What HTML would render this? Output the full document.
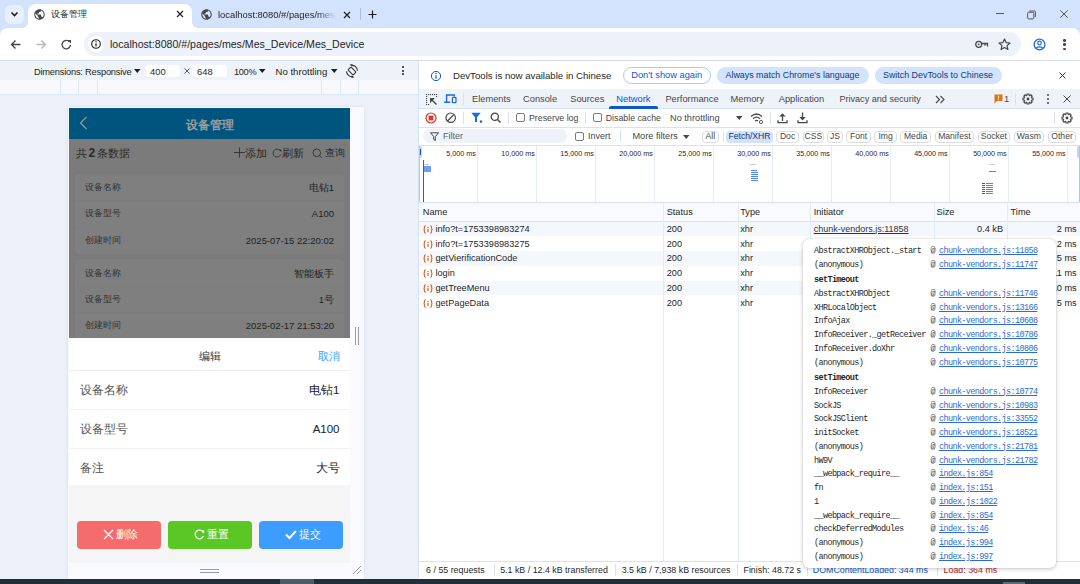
<!DOCTYPE html>
<html><head><meta charset="utf-8">
<style>
*{box-sizing:border-box;margin:0;padding:0}
html,body{width:1080px;height:584px;overflow:hidden;background:#fff;font-family:"Liberation Sans",sans-serif;color:#1f1f1f}
.a{position:absolute}
.t{position:absolute;white-space:nowrap;line-height:1}
svg{position:absolute;overflow:visible}
.mono{font-family:"Liberation Mono",monospace;font-size:8.5px;letter-spacing:-0.63px;color:#4a4a4a}
</style></head><body>

<!-- ===== Tab strip ===== -->
<div class="a" style="left:0;top:0;width:1080px;height:36px;background:#d3e3fd"></div>
<!-- active tab -->
<div class="a" style="left:28px;top:4px;width:164px;height:26px;background:#fff;border-radius:8px 8px 0 0"></div>
<div class="a" style="left:22px;top:22px;width:6px;height:6px;background:#fff"></div>
<div class="a" style="left:16px;top:16px;width:12px;height:12px;background:#d3e3fd;border-radius:0 0 6px 0"></div>
<div class="a" style="left:192px;top:22px;width:6px;height:6px;background:#fff"></div>
<div class="a" style="left:192px;top:16px;width:12px;height:12px;background:#d3e3fd;border-radius:0 0 0 6px"></div>
<div class="a" style="left:5px;top:5px;width:19px;height:19px;border-radius:6px;background:#e8f0fe"></div>
<svg style="left:0;top:0" width="30" height="30"><path d="M11.5 12.5 L14.5 15.5 L17.5 12.5" fill="none" stroke="#1f1f1f" stroke-width="1.6"/></svg>

<!-- globe -->
<svg style="left:34px;top:8.5px" width="11" height="11" viewBox="1.5 1.5 21 21"><path d="M12 2C6.48 2 2 6.48 2 12s4.48 10 10 10 10-4.48 10-10S17.52 2 12 2zm-1 17.930c-3.95-.49-7-3.85-7-7.93 0-.62.08-1.21.21-1.79L9 15v1c0 1.1.9 2 2 2v1.93zm6.9-2.54c-.26-.81-1-1.39-1.9-1.39h-1v-3c0-.55-.45-1-1-1H8v-2h2c.55 0 1-.45 1-1V7h2c1.1 0 2-.9 2-2v-.41c2.93 1.19 5 4.06 5 7.41 0 2.08-.8 3.970-2.1 5.39z" fill="#474747"/></svg>
<div class="t" style="left:51px;top:9.5px;font-size:8.6px;color:#1f1f1f">设备管理</div>
<svg style="left:176px;top:10px" width="8" height="8"><path d="M1 1 L7 7 M7 1 L1 7" stroke="#1f1f1f" stroke-width="1.2"/></svg>
<!-- tab 2 -->
<svg style="left:201px;top:8.5px" width="11" height="11" viewBox="1.5 1.5 21 21"><path d="M12 2C6.48 2 2 6.48 2 12s4.48 10 10 10 10-4.48 10-10S17.52 2 12 2zm-1 17.930c-3.95-.49-7-3.85-7-7.93 0-.62.08-1.21.21-1.79L9 15v1c0 1.1.9 2 2 2v1.93zm6.9-2.54c-.26-.81-1-1.39-1.9-1.39h-1v-3c0-.55-.45-1-1-1H8v-2h2c.55 0 1-.45 1-1V7h2c1.1 0 2-.9 2-2v-.41c2.93 1.19 5 4.06 5 7.41 0 2.08-.8 3.970-2.1 5.39z" fill="#474747"/></svg>
<div class="t" style="left:218px;top:8px;line-height:13px;font-size:9.4px;color:#1f1f1f;width:118px;overflow:hidden;-webkit-mask-image:linear-gradient(90deg,#000 85%,transparent)">localhost:8080/#/pages/mes/Mes_Device</div>
<svg style="left:343px;top:10.5px" width="8" height="8"><path d="M1 1 L7 7 M7 1 L1 7" stroke="#1f1f1f" stroke-width="1.2"/></svg>
<div class="a" style="left:360px;top:8px;width:1px;height:12px;background:#a8c0e8"></div>
<svg style="left:368px;top:9.5px" width="9" height="9"><path d="M4.5 0.5 V8.5 M0.5 4.5 H8.5" stroke="#1f1f1f" stroke-width="1.2"/></svg>
<!-- window controls -->
<div class="a" style="left:996px;top:13px;width:8px;height:1px;background:#555"></div>
<svg style="left:1026.5px;top:9.5px" width="10" height="10"><rect x="0.6" y="2.3" width="6.2" height="6.6" rx="1" fill="none" stroke="#555" stroke-width="1"/><path d="M2.3 1 H7.6 Q8.4 1 8.4 1.8 V7" fill="none" stroke="#555" stroke-width="1"/></svg>
<svg style="left:1060px;top:10px" width="8" height="8"><path d="M0.3 0.3 L7.7 7.7 M7.7 0.3 L0.3 7.7" stroke="#444" stroke-width="0.9"/></svg>

<!-- ===== Toolbar ===== -->
<div class="a" style="left:0;top:28px;width:1080px;height:32px;background:#fff;border-radius:8px 8px 0 0"></div>
<div class="a" style="left:0;top:60px;width:1080px;height:1px;background:#d7dce4"></div>
<svg style="left:10px;top:39px" width="12" height="11"><path d="M10.5 5.5 H1.5 M5.5 1.5 L1.5 5.5 L5.5 9.5" fill="none" stroke="#474747" stroke-width="1.4"/></svg>
<svg style="left:36px;top:39px" width="12" height="11"><path d="M0.5 5.5 H9.5 M5.5 1.5 L9.5 5.5 L5.5 9.5" fill="none" stroke="#b8b8b8" stroke-width="1.4"/></svg>
<svg style="left:61px;top:39px" width="11" height="11"><path d="M8.6 3 A4.2 4.2 0 1 0 9.5 6" fill="none" stroke="#474747" stroke-width="1.4"/><path d="M6.5 1 L10 1 L10 4.5Z" fill="#474747"/></svg>
<div class="a" style="left:84px;top:32px;width:937px;height:24px;border-radius:12px;background:#edf2fa"></div>
<div class="a" style="left:88px;top:36px;width:16px;height:16px;border-radius:8px;background:#fff"></div>
<svg style="left:91px;top:39px" width="10" height="10"><circle cx="5" cy="5" r="4.3" fill="none" stroke="#1f1f1f" stroke-width="1.1"/><path d="M5 4.2 V7.5" stroke="#1f1f1f" stroke-width="1.2"/><circle cx="5" cy="2.7" r="0.7" fill="#1f1f1f"/></svg>
<div class="t" style="left:110px;top:39px;font-size:10.6px;color:#1f1f1f">localhost<span style="color:#1f1f1f">:8080/#/pages/mes/Mes_Device/Mes_Device</span></div>
<svg style="left:975px;top:40px" width="14" height="9"><circle cx="3.7" cy="4.3" r="3" fill="none" stroke="#474747" stroke-width="1.3"/><circle cx="3.7" cy="4.3" r="0.9" fill="#474747"/><path d="M6.7 3.5 H12.5 V6.5 M10 3.5 V5.8" fill="none" stroke="#474747" stroke-width="1.3"/></svg>
<svg style="left:998px;top:38px" width="13" height="13"><path d="M6.5 1 L8.1 4.6 L12 5 L9 7.6 L9.9 11.5 L6.5 9.5 L3.1 11.5 L4 7.6 L1 5 L4.9 4.6Z" fill="none" stroke="#474747" stroke-width="1.2" stroke-linejoin="round"/></svg>
<svg style="left:1033px;top:38px" width="13" height="13"><circle cx="6.5" cy="6.5" r="5.4" fill="none" stroke="#1f6ae0" stroke-width="1.3"/><circle cx="6.5" cy="5" r="1.8" fill="none" stroke="#1f6ae0" stroke-width="1.2"/><path d="M3 10.2 Q6.5 7.5 10 10.2" fill="none" stroke="#1f6ae0" stroke-width="1.2"/></svg>
<div class="a" style="left:1063.2px;top:39.2px;width:2.5px;height:2.5px;border-radius:50%;background:#474747"></div>
<div class="a" style="left:1063.2px;top:43.4px;width:2.5px;height:2.5px;border-radius:50%;background:#474747"></div>
<div class="a" style="left:1063.2px;top:47.6px;width:2.5px;height:2.5px;border-radius:50%;background:#474747"></div>

<!-- ===== Left: device emulation ===== -->
<!-- device toolbar -->
<div class="a" style="left:0;top:61px;width:418px;height:19px;background:#eef2f9"></div>
<div class="t" style="left:34px;top:67.9px;font-size:9.3px;letter-spacing:-0.22px;color:#1f1f1f">Dimensions: Responsive</div>
<svg style="left:134px;top:69px" width="7" height="5"><path d="M0 0 H6.5 L3.25 4Z" fill="#1f1f1f"/></svg>
<div class="a" style="left:146px;top:64.5px;width:34px;height:12px;background:#fff;border-radius:3px"></div>
<div class="t" style="left:150px;top:66.6px;font-size:9.4px;color:#1f1f1f">400</div>
<svg style="left:184px;top:68px" width="6" height="6"><path d="M0.5 0.5 L5.5 5.5 M5.5 0.5 L0.5 5.5" stroke="#474747" stroke-width="0.9"/></svg>
<div class="a" style="left:192px;top:64.5px;width:35px;height:12px;background:#fff;border-radius:3px"></div>
<div class="t" style="left:197px;top:66.6px;font-size:9.4px;color:#1f1f1f">648</div>
<div class="t" style="left:234px;top:67.9px;font-size:9.2px;letter-spacing:-0.3px;color:#1f1f1f">100%</div>
<svg style="left:259px;top:69px" width="7" height="5"><path d="M0 0 H6.5 L3.25 4Z" fill="#1f1f1f"/></svg>
<div class="t" style="left:275.5px;top:66.8px;font-size:9.6px;color:#1f1f1f">No throttling</div>
<svg style="left:331px;top:69px" width="7" height="5"><path d="M0 0 H6.5 L3.25 4Z" fill="#1f1f1f"/></svg>
<svg style="left:345.4px;top:63.5px" width="14" height="14"><rect x="4.9" y="3.4" width="4.2" height="7.2" rx="1" transform="rotate(-45 7 7)" fill="none" stroke="#333" stroke-width="1.1"/><path d="M6.2 1.4 A5.6 5.6 0 0 1 12.5 6.8" fill="none" stroke="#333" stroke-width="1.1"/><path d="M7.8 12.6 A5.6 5.6 0 0 1 1.5 7.2" fill="none" stroke="#333" stroke-width="1.1"/><path d="M4.6 0.8 L7.6 0 L7 2.6Z M9.4 13.2 L6.4 14 L7 11.4Z" fill="#333"/></svg>
<div class="a" style="left:401.5px;top:66px;width:2px;height:2px;border-radius:1px;background:#1f1f1f"></div>
<div class="a" style="left:401.5px;top:69.5px;width:2px;height:2px;border-radius:1px;background:#1f1f1f"></div>
<div class="a" style="left:401.5px;top:73px;width:2px;height:2px;border-radius:1px;background:#1f1f1f"></div>
<!-- ruler -->
<div class="a" style="left:0;top:80px;width:418px;height:15px;background:#f7f9fd;border-bottom:1px solid #dde6f5"></div>
<div class="a" style="left:60px;top:80px;width:1px;height:14px;background:#dde6f5"></div>
<div class="a" style="left:78px;top:80px;width:1px;height:14px;background:#dde6f5"></div>
<div class="a" style="left:97px;top:80px;width:1px;height:14px;background:#dde6f5"></div>
<div class="a" style="left:321px;top:80px;width:1px;height:14px;background:#dde6f5"></div>
<div class="a" style="left:340px;top:80px;width:1px;height:14px;background:#dde6f5"></div>
<div class="a" style="left:358px;top:80px;width:1px;height:14px;background:#dde6f5"></div>
<!-- device area -->
<div class="a" style="left:0;top:95px;width:418px;height:484px;background:#ecf0f8"></div>
<div class="a" style="left:68px;top:107px;width:296px;height:472px;background:#f8faff;box-shadow:0 0 3px rgba(60,80,120,.12)"></div>
<!-- scrollbar handle -->
<div class="a" style="left:355px;top:327px;width:1px;height:18px;background:#9a9a9a"></div>
<div class="a" style="left:358px;top:327px;width:1px;height:18px;background:#9a9a9a"></div>
<!-- bottom handle -->
<div class="a" style="left:200px;top:569px;width:19px;height:1px;background:#9a9a9a"></div>
<div class="a" style="left:200px;top:572px;width:19px;height:1px;background:#9a9a9a"></div>
<svg style="left:352px;top:565px" width="10" height="10"><path d="M1 9 L9 1 M5 9 L9 5" stroke="#9a9a9a" stroke-width="1"/></svg>

<!-- phone -->
<div class="a" style="left:69px;top:108px;width:281px;height:455px;overflow:hidden;background:#f5f5f5">
  <!-- header -->
  <div class="a" style="left:0;top:0;width:281px;height:31px;background:#00557f"></div>
  <svg style="left:10px;top:8px" width="9" height="14"><path d="M7.5 1 L1.5 7 L7.5 13" fill="none" stroke="#a09c96" stroke-width="1.1"/></svg>
  <div class="t" style="left:0;width:281px;text-align:center;top:10.5px;font-size:12px;font-weight:bold;color:#9c9c9c">设备管理</div>
  <!-- list overlay region -->
  <div class="a" style="left:0;top:31px;width:281px;height:199px;background:#7b7b7b"></div>
  <div class="t" style="left:7px;top:38.6px;font-size:11px;color:#282828">共<b style="font-size:12px;margin:0 1.5px">2</b>条数据</div>
  <svg style="left:165px;top:39px" width="11" height="11"><path d="M5.5 0.5 V10.5 M0 5.5 H11" stroke="#303030" stroke-width="0.9"/></svg>
  <div class="t" style="left:176px;top:40px;font-size:10.5px;color:#282828">添加</div>
  <svg style="left:203px;top:40px" width="10" height="10"><path d="M8.6 3.2 A4 4 0 1 0 8.8 6.5" fill="none" stroke="#303030" stroke-width="0.9"/><path d="M6.8 1.5 L9.3 1.5 L9.3 4Z" fill="#303030"/></svg>
  <div class="t" style="left:213px;top:40px;font-size:10.5px;color:#282828">刷新</div>
  <svg style="left:243px;top:39.5px" width="11" height="11"><circle cx="4.8" cy="4.8" r="3.8" fill="none" stroke="#303030" stroke-width="0.9"/><path d="M7.5 7.5 L10 10" stroke="#303030" stroke-width="0.9"/></svg>
  <div class="t" style="left:256px;top:40.3px;font-size:10.2px;color:#282828">查询</div>
  <!-- card 1 -->
  <div class="a" style="left:6px;top:66px;width:269px;height:79.5px;background:#7f7f7f;border-radius:3px;box-shadow:0 0 1px rgba(0,0,0,.06)"></div>
  <div class="a" style="left:6px;top:92px;width:269px;height:1px;background:#7c7c7c"></div>
  <div class="a" style="left:6px;top:119px;width:269px;height:1px;background:#7c7c7c"></div>
  <div class="t" style="left:16px;top:75px;font-size:9.2px;color:#333">设备名称</div>
  <div class="t" style="right:16px;top:75px;font-size:9.5px;color:#222">电钻1</div>
  <div class="t" style="left:16px;top:101px;font-size:9.2px;color:#333">设备型号</div>
  <div class="t" style="right:16px;top:101px;font-size:9.5px;color:#222">A100</div>
  <div class="t" style="left:16px;top:128px;font-size:9.2px;color:#333">创建时间</div>
  <div class="t" style="right:16px;top:128px;font-size:9.5px;color:#222">2025-07-15 22:20:02</div>
  <!-- card 2 -->
  <div class="a" style="left:6px;top:151px;width:269px;height:90px;background:#7f7f7f;border-radius:3px;box-shadow:0 0 1px rgba(0,0,0,.08)"></div>
  <div class="a" style="left:6px;top:178px;width:269px;height:1px;background:#7c7c7c"></div>
  <div class="a" style="left:6px;top:204px;width:269px;height:1px;background:#7c7c7c"></div>
  <div class="t" style="left:16px;top:161px;font-size:9.2px;color:#333">设备名称</div>
  <div class="t" style="right:16px;top:161px;font-size:9.5px;color:#222">智能板手</div>
  <div class="t" style="left:16px;top:187px;font-size:9.2px;color:#333">设备型号</div>
  <div class="t" style="right:16px;top:187px;font-size:9.5px;color:#222">1号</div>
  <div class="t" style="left:16px;top:213px;font-size:9.2px;color:#333">创建时间</div>
  <div class="t" style="right:16px;top:213px;font-size:9.5px;color:#222">2025-02-17 21:53:20</div>
  <!-- popup -->
  <div class="a" style="left:0;top:230px;width:281px;height:225px;background:#f5f5f5"></div>
  <div class="a" style="left:0;top:230px;width:281px;height:147px;background:#fff"></div>
  <div class="t" style="left:0;width:281px;text-align:center;top:243.2px;font-size:11px;color:#333">编辑</div>
  <div class="t" style="right:10.5px;top:243px;font-size:10.5px;color:#3c9cff">取消</div>
  <div class="a" style="left:0;top:262px;width:281px;height:1px;background:#eeeeee"></div>
  <div class="t" style="left:11px;top:277px;font-size:11.5px;color:#555">设备名称</div>
  <div class="t" style="right:10.5px;top:277px;font-size:11.5px;color:#222">电钻1</div>
  <div class="a" style="left:0;top:301px;width:281px;height:1px;background:#f2f2f2"></div>
  <div class="t" style="left:11px;top:316px;font-size:11.5px;color:#555">设备型号</div>
  <div class="t" style="right:10.5px;top:316px;font-size:11.5px;color:#222">A100</div>
  <div class="a" style="left:0;top:340px;width:281px;height:1px;background:#f2f2f2"></div>
  <div class="t" style="left:11px;top:355px;font-size:11.5px;color:#555">备注</div>
  <div class="t" style="right:10.5px;top:355px;font-size:11.5px;color:#222">大号</div>
  <!-- buttons -->
  <div class="a" style="left:7.5px;top:413px;width:84px;height:27.5px;border-radius:4px;background:#f56c6c"></div>
  <div class="a" style="left:98.7px;top:413px;width:84px;height:27.5px;border-radius:4px;background:#5ac725"></div>
  <div class="a" style="left:190.4px;top:413px;width:84px;height:27.5px;border-radius:4px;background:#3c9cff"></div>
  <svg style="left:34px;top:421px" width="11" height="11"><path d="M1 1 L10 10 M10 1 L1 10" stroke="#fff" stroke-width="1.2"/></svg>
  <div class="t" style="left:47px;top:421px;font-size:10.5px;color:#fff">删除</div>
  <svg style="left:125px;top:421px" width="11" height="11"><path d="M9.2 3.3 A4.3 4.3 0 1 0 9.5 7" fill="none" stroke="#fff" stroke-width="1.3"/><path d="M7 1.2 L10.2 1.2 L10.2 4.5Z" fill="#fff"/></svg>
  <div class="t" style="left:138px;top:421px;font-size:10.5px;color:#fff">重置</div>
  <svg style="left:216px;top:421px" width="12" height="11"><path d="M1 5.5 L4.5 9 L11 2" fill="none" stroke="#fff" stroke-width="2"/></svg>
  <div class="t" style="left:230px;top:421px;font-size:10.5px;color:#fff">提交</div>
</div>


<!-- ===== DevTools ===== -->
<!-- devtools base -->
<div class="a" style="left:418px;top:61px;width:662px;height:517px;background:#fff"></div>
<div class="a" style="left:418px;top:61px;width:1px;height:517px;background:#d6e2f5"></div>
<!-- infobar -->
<svg style="left:430px;top:70px" width="12" height="12"><circle cx="6" cy="6" r="4.6" fill="none" stroke="#0b57d0" stroke-width="1"/><path d="M6 5.2 V8.8" stroke="#0b57d0" stroke-width="1.2"/><circle cx="6" cy="3.6" r="0.75" fill="#0b57d0"/></svg>
<div class="t" style="left:453px;top:70.5px;font-size:9.65px;color:#1f1f1f">DevTools is now available in Chinese</div>
<div class="a" style="left:622.5px;top:67px;width:88.5px;height:17px;border:1px solid #a8c7fa;border-radius:9px"></div>
<div class="t" style="left:622.5px;width:88.5px;text-align:center;top:71px;font-size:9.3px;color:#0b57d0">Don't show again</div>
<div class="a" style="left:716.5px;top:67px;width:152px;height:17px;background:#d3e3fd;border-radius:9px"></div>
<div class="t" style="left:716.5px;width:152px;text-align:center;top:71.3px;font-size:8.9px;color:#0a3a7a">Always match Chrome's language</div>
<div class="a" style="left:874.5px;top:67px;width:127px;height:17px;background:#d3e3fd;border-radius:9px"></div>
<div class="t" style="left:874.5px;width:127px;text-align:center;top:71.3px;font-size:8.9px;color:#0a3a7a">Switch DevTools to Chinese</div>
<svg style="left:1058.5px;top:71.5px" width="7" height="7"><path d="M0.5 0.5 L6.5 6.5 M6.5 0.5 L0.5 6.5" stroke="#333" stroke-width="1"/></svg>
<!-- tab bar -->
<div class="a" style="left:419px;top:89px;width:661px;height:20px;background:#eef2f9;border-bottom:1px solid #d6e2f5"></div>
<svg style="left:425.5px;top:93.8px" width="12" height="12"><g fill="#474747"><rect x="0" y="0" width="1.1" height="1.1"/><rect x="2" y="0" width="1.1" height="1.1"/><rect x="4" y="0" width="1.1" height="1.1"/><rect x="6" y="0" width="1.1" height="1.1"/><rect x="8" y="0" width="1.1" height="1.1"/><rect x="10" y="0" width="1.1" height="1.1"/><rect x="0" y="2" width="1.1" height="1.1"/><rect x="0" y="4" width="1.1" height="1.1"/><rect x="0" y="6" width="1.1" height="1.1"/><rect x="0" y="8" width="1.1" height="1.1"/><rect x="0" y="10" width="1.1" height="1.1"/><rect x="10" y="2" width="1.1" height="1.1"/><rect x="2" y="10" width="1.1" height="1.1"/></g><path d="M4.8 4.8 L10.5 10.5" stroke="#474747" stroke-width="1.4"/><path d="M4 4 H9 L4 9Z" fill="#474747"/></svg>
<svg style="left:444px;top:93px" width="14" height="11"><path d="M2.6 9 V2 H10.3 V3.5" fill="none" stroke="#1f6ae0" stroke-width="1.4"/><path d="M0.6 9.2 H5.6" stroke="#1f6ae0" stroke-width="1.5" stroke-linecap="round"/><rect x="8.4" y="4.3" width="3.6" height="5.4" rx="0.8" fill="none" stroke="#1f6ae0" stroke-width="1.3"/></svg>
<div class="a" style="left:463px;top:93px;width:1px;height:12px;background:#d6e2f5"></div>
<div class="t" style="left:472px;top:94.5px;font-size:9.3px;color:#474747">Elements</div>
<div class="t" style="left:523px;top:94.5px;font-size:9.3px;color:#474747">Console</div>
<div class="t" style="left:570.2px;top:94.5px;font-size:9.3px;color:#474747">Sources</div>
<div class="t" style="left:616.3px;top:94.5px;font-size:9.3px;color:#0b57d0">Network</div>
<div class="a" style="left:609px;top:106px;width:49px;height:2.5px;border-radius:2px 2px 0 0;background:#0b57d0"></div>
<div class="t" style="left:665.4px;top:94.5px;font-size:9.3px;color:#474747">Performance</div>
<div class="t" style="left:730.5px;top:94.5px;font-size:9.3px;color:#474747">Memory</div>
<div class="t" style="left:778.7px;top:94.5px;font-size:9.3px;color:#474747">Application</div>
<div class="t" style="left:839.4px;top:94.5px;font-size:9.1px;color:#474747">Privacy and security</div>
<svg style="left:935px;top:95px" width="11" height="9"><path d="M1 1 L4.5 4.5 L1 8 M5.5 1 L9 4.5 L5.5 8" fill="none" stroke="#474747" stroke-width="1.1"/></svg>
<svg style="left:994px;top:94px" width="9" height="10"><path d="M0.5 0.5 H8.5 V7 H3 L0.5 9.5Z" fill="#e8710a"/><path d="M4.5 1.8 V4.6 M4.5 5.5 V6.3" stroke="#fff" stroke-width="1.1"/></svg>
<div class="t" style="left:1004px;top:94.5px;font-size:9.3px;color:#474747">1</div>
<div class="a" style="left:1015px;top:93px;width:1px;height:12px;background:#d6e2f5"></div>
<svg style="left:1021.5999999999999px;top:92.6px" width="12" height="12" viewBox="0 0 24 24"><path d="M19.26 9.75 L22.02 10.07 L22.02 13.93 L19.26 14.25 L18.72 15.55 L20.44 17.72 L17.72 20.44 L15.55 18.72 L14.25 19.26 L13.93 22.02 L10.07 22.02 L9.75 19.26 L8.45 18.72 L6.28 20.44 L3.56 17.72 L5.28 15.55 L4.74 14.25 L1.98 13.93 L1.98 10.07 L4.74 9.75 L5.28 8.45 L3.56 6.28 L6.28 3.56 L8.45 5.28 L9.75 4.74 L10.07 1.98 L13.93 1.98 L14.25 4.74 L15.55 5.28 L17.72 3.56 L20.44 6.28 L18.72 8.45Z" fill="none" stroke="#474747" stroke-width="2.3" stroke-linejoin="round"/><circle cx="12" cy="12" r="2.8" fill="#474747"/></svg>
<div class="a" style="left:1046.5px;top:94px;width:2px;height:2px;border-radius:1px;background:#474747"></div>
<div class="a" style="left:1046.5px;top:98px;width:2px;height:2px;border-radius:1px;background:#474747"></div>
<div class="a" style="left:1046.5px;top:102px;width:2px;height:2px;border-radius:1px;background:#474747"></div>
<svg style="left:1062.5px;top:95px" width="8" height="8"><path d="M0.5 0.5 L7.5 7.5 M7.5 0.5 L0.5 7.5" stroke="#474747" stroke-width="1"/></svg>
<!-- network toolbar -->
<div class="a" style="left:419px;top:127px;width:661px;height:1px;background:#d6e2f5"></div>
<svg style="left:424.5px;top:111.5px" width="12" height="12"><circle cx="6" cy="6" r="5" fill="none" stroke="#dc362e" stroke-width="1.2"/><rect x="3.6" y="3.6" width="4.8" height="4.8" fill="#dc362e"/></svg>
<svg style="left:444.5px;top:112px" width="12" height="12"><circle cx="5.7" cy="5.7" r="4.7" fill="none" stroke="#474747" stroke-width="1.2"/><path d="M2.5 9 L9 2.5" stroke="#474747" stroke-width="1.2"/></svg>
<div class="a" style="left:463px;top:111.5px;width:1px;height:12px;background:#d6e2f5"></div>
<svg style="left:471px;top:112px" width="12" height="12"><path d="M0.3 0.8 H9.7 L6 5.3 V10 H4 V5.3Z" fill="#1f6ae0"/><circle cx="10" cy="9.6" r="1.3" fill="#1f6ae0"/></svg>
<svg style="left:490px;top:111.5px" width="12" height="12"><circle cx="4.8" cy="4.8" r="3.6" fill="none" stroke="#474747" stroke-width="1.3"/><path d="M7.5 7.5 L10.5 10.5" stroke="#474747" stroke-width="1.5"/></svg>
<div class="a" style="left:508px;top:111.5px;width:1px;height:12px;background:#d6e2f5"></div>
<div class="a" style="left:516px;top:113px;width:9px;height:9px;border:1px solid #7a7a7a;border-radius:2px"></div>
<div class="t" style="left:529px;top:113.8px;font-size:8.8px;color:#474747">Preserve log</div>
<div class="a" style="left:585px;top:111.5px;width:1px;height:12px;background:#d6e2f5"></div>
<div class="a" style="left:593px;top:113px;width:9px;height:9px;border:1px solid #7a7a7a;border-radius:2px"></div>
<div class="t" style="left:605.7px;top:113.8px;font-size:8.8px;color:#474747">Disable cache</div>
<div class="t" style="left:670px;top:113.8px;font-size:9.2px;color:#474747">No throttling</div>
<svg style="left:736px;top:116px" width="7" height="5"><path d="M0 0 H6.5 L3.25 4Z" fill="#474747"/></svg>
<svg style="left:750px;top:111.5px" width="14" height="12"><path d="M1 4.5 Q6.5 -0.5 12 4.5 M3 6.8 Q6.5 3.6 10 6.8 M5 9 Q6.5 7.8 8 9" fill="none" stroke="#474747" stroke-width="1.2"/><circle cx="11" cy="10" r="1.6" fill="#fff" stroke="#474747" stroke-width="0.9"/></svg>
<div class="a" style="left:770px;top:111.5px;width:1px;height:12px;background:#d6e2f5"></div>
<svg style="left:777px;top:111.5px" width="11" height="12"><path d="M5.5 9 V3" fill="none" stroke="#474747" stroke-width="1.3"/><path d="M2.3 4.6 L5.5 1.2 L8.7 4.6Z" fill="#474747"/><path d="M1 8.2 V10.6 H10 V8.2" fill="none" stroke="#474747" stroke-width="1.3"/></svg>
<svg style="left:796.5px;top:111.5px" width="11" height="12"><path d="M5.5 0.5 V6" fill="none" stroke="#474747" stroke-width="1.3"/><path d="M2.3 5 L5.5 8.4 L8.7 5Z" fill="#474747"/><path d="M1 8.2 V10.6 H10 V8.2" fill="none" stroke="#474747" stroke-width="1.3"/></svg>
<div class="a" style="left:1054px;top:111.5px;width:1px;height:12px;background:#d6e2f5"></div>
<svg style="left:1060.7px;top:111.5px" width="12" height="12" viewBox="0 0 24 24"><path d="M19.26 9.75 L22.02 10.07 L22.02 13.93 L19.26 14.25 L18.72 15.55 L20.44 17.72 L17.72 20.44 L15.55 18.72 L14.25 19.26 L13.93 22.02 L10.07 22.02 L9.75 19.26 L8.45 18.72 L6.28 20.44 L3.56 17.72 L5.28 15.55 L4.74 14.25 L1.98 13.93 L1.98 10.07 L4.74 9.75 L5.28 8.45 L3.56 6.28 L6.28 3.56 L8.45 5.28 L9.75 4.74 L10.07 1.98 L13.93 1.98 L14.25 4.74 L15.55 5.28 L17.72 3.56 L20.44 6.28 L18.72 8.45Z" fill="none" stroke="#474747" stroke-width="2.3" stroke-linejoin="round"/><circle cx="12" cy="12" r="2.8" fill="#474747"/></svg>
<!-- filter row -->
<div class="a" style="left:419px;top:145px;width:661px;height:1px;background:#d6e2f5"></div>
<div class="a" style="left:422.5px;top:129px;width:144.5px;height:14px;border-radius:7px;background:#eef2f9"></div>
<svg style="left:429.5px;top:131.5px" width="9" height="9"><path d="M0.5 0.8 H8.5 L5.3 4.6 V8.5 L3.7 7.5 V4.6Z" fill="none" stroke="#474747" stroke-width="1"/></svg>
<div class="t" style="left:443px;top:131.5px;font-size:9px;color:#5f6368">Filter</div>
<div class="a" style="left:575px;top:131.5px;width:9px;height:9px;border:1px solid #7a7a7a;border-radius:2px"></div>
<div class="t" style="left:588px;top:132.2px;font-size:9px;color:#474747">Invert</div>
<div class="a" style="left:619.5px;top:130px;width:1px;height:12px;background:#d6e2f5"></div>
<div class="t" style="left:632.4px;top:132.2px;font-size:9.2px;color:#474747">More filters</div>
<svg style="left:683px;top:134.5px" width="7" height="5"><path d="M0 0 H6.5 L3.25 4Z" fill="#474747"/></svg>
<div class="a" style="left:701.6px;top:130.5px;width:17.6px;height:12px;border-radius:4px;border:1px solid #dadce0"></div>
<div class="t" style="left:701.6px;width:17.6px;text-align:center;top:132.3px;font-size:8.6px;color:#474747">All</div>
<div class="a" style="left:726.1px;top:130.5px;width:46.8px;height:12px;border-radius:4px;background:#d3e3fd"></div>
<div class="t" style="left:726.1px;width:46.8px;text-align:center;top:132.3px;font-size:8.6px;color:#0a3a7a">Fetch/XHR</div>
<div class="a" style="left:776.3px;top:130.5px;width:22.5px;height:12px;border-radius:4px;border:1px solid #dadce0"></div>
<div class="t" style="left:776.3px;width:22.5px;text-align:center;top:132.3px;font-size:8.6px;color:#474747">Doc</div>
<div class="a" style="left:802.5px;top:130.5px;width:21.8px;height:12px;border-radius:4px;border:1px solid #dadce0"></div>
<div class="t" style="left:802.5px;width:21.8px;text-align:center;top:132.3px;font-size:8.6px;color:#474747">CSS</div>
<div class="a" style="left:827.3px;top:130.5px;width:15.4px;height:12px;border-radius:4px;border:1px solid #dadce0"></div>
<div class="t" style="left:827.3px;width:15.4px;text-align:center;top:132.3px;font-size:8.6px;color:#474747">JS</div>
<div class="a" style="left:846.2px;top:130.5px;width:24.8px;height:12px;border-radius:4px;border:1px solid #dadce0"></div>
<div class="t" style="left:846.2px;width:24.8px;text-align:center;top:132.3px;font-size:8.6px;color:#474747">Font</div>
<div class="a" style="left:874.4px;top:130.5px;width:22.3px;height:12px;border-radius:4px;border:1px solid #dadce0"></div>
<div class="t" style="left:874.4px;width:22.3px;text-align:center;top:132.3px;font-size:8.6px;color:#474747">Img</div>
<div class="a" style="left:900.1px;top:130.5px;width:31.1px;height:12px;border-radius:4px;border:1px solid #dadce0"></div>
<div class="t" style="left:900.1px;width:31.1px;text-align:center;top:132.3px;font-size:8.6px;color:#474747">Media</div>
<div class="a" style="left:934.6px;top:130.5px;width:39.6px;height:12px;border-radius:4px;border:1px solid #dadce0"></div>
<div class="t" style="left:934.6px;width:39.6px;text-align:center;top:132.3px;font-size:8.6px;color:#474747">Manifest</div>
<div class="a" style="left:977.7px;top:130.5px;width:32.4px;height:12px;border-radius:4px;border:1px solid #dadce0"></div>
<div class="t" style="left:977.7px;width:32.4px;text-align:center;top:132.3px;font-size:8.6px;color:#474747">Socket</div>
<div class="a" style="left:1013.6px;top:130.5px;width:30.5px;height:12px;border-radius:4px;border:1px solid #dadce0"></div>
<div class="t" style="left:1013.6px;width:30.5px;text-align:center;top:132.3px;font-size:8.6px;color:#474747">Wasm</div>
<div class="a" style="left:1047.6px;top:130.5px;width:28.9px;height:12px;border-radius:4px;border:1px solid #dadce0"></div>
<div class="t" style="left:1047.6px;width:28.9px;text-align:center;top:132.3px;font-size:8.6px;color:#474747">Other</div>
<div class="a" style="left:723px;top:131px;width:1px;height:11px;background:#d6e2f5"></div>
<!-- overview -->
<div class="a" style="left:419px;top:202px;width:661px;height:1px;background:#d6e2f5"></div>
<div class="a" style="left:477.4px;top:146px;width:1px;height:56px;background:#e3ebf7"></div>
<div class="t" style="left:397.4px;width:78.5px;text-align:right;top:149.8px;font-size:7.2px;color:#1f1f1f">5,000 ms</div>
<div class="a" style="left:536.4px;top:146px;width:1px;height:56px;background:#e3ebf7"></div>
<div class="t" style="left:456.4px;width:78.5px;text-align:right;top:149.8px;font-size:7.2px;color:#1f1f1f">10,000 ms</div>
<div class="a" style="left:595.4px;top:146px;width:1px;height:56px;background:#e3ebf7"></div>
<div class="t" style="left:515.4px;width:78.5px;text-align:right;top:149.8px;font-size:7.2px;color:#1f1f1f">15,000 ms</div>
<div class="a" style="left:654.3px;top:146px;width:1px;height:56px;background:#e3ebf7"></div>
<div class="t" style="left:574.3px;width:78.5px;text-align:right;top:149.8px;font-size:7.2px;color:#1f1f1f">20,000 ms</div>
<div class="a" style="left:713.3px;top:146px;width:1px;height:56px;background:#e3ebf7"></div>
<div class="t" style="left:633.3px;width:78.5px;text-align:right;top:149.8px;font-size:7.2px;color:#1f1f1f">25,000 ms</div>
<div class="a" style="left:772.3px;top:146px;width:1px;height:56px;background:#e3ebf7"></div>
<div class="t" style="left:692.3px;width:78.5px;text-align:right;top:149.8px;font-size:7.2px;color:#1f1f1f">30,000 ms</div>
<div class="a" style="left:831.3px;top:146px;width:1px;height:56px;background:#e3ebf7"></div>
<div class="t" style="left:751.3px;width:78.5px;text-align:right;top:149.8px;font-size:7.2px;color:#1f1f1f">35,000 ms</div>
<div class="a" style="left:890.3px;top:146px;width:1px;height:56px;background:#e3ebf7"></div>
<div class="t" style="left:810.3px;width:78.5px;text-align:right;top:149.8px;font-size:7.2px;color:#1f1f1f">40,000 ms</div>
<div class="a" style="left:949.2px;top:146px;width:1px;height:56px;background:#e3ebf7"></div>
<div class="t" style="left:869.2px;width:78.5px;text-align:right;top:149.8px;font-size:7.2px;color:#1f1f1f">45,000 ms</div>
<div class="a" style="left:1008.2px;top:146px;width:1px;height:56px;background:#e3ebf7"></div>
<div class="t" style="left:928.2px;width:78.5px;text-align:right;top:149.8px;font-size:7.2px;color:#1f1f1f">50,000 ms</div>
<div class="a" style="left:1067.2px;top:146px;width:1px;height:56px;background:#e3ebf7"></div>
<div class="t" style="left:987.2px;width:78.5px;text-align:right;top:149.8px;font-size:7.2px;color:#1f1f1f">55,000 ms</div>
<div class="a" style="left:419px;top:146px;width:3px;height:12px;background:#c2d5f5;border-radius:0 2px 2px 0"></div>
<div class="a" style="left:419.5px;top:149px;width:1px;height:6px;background:#0b57d0"></div>
<div class="a" style="left:1077px;top:146px;width:3px;height:12px;background:#c2d5f5;border-radius:2px 0 0 2px"></div>
<div class="a" style="left:1078.5px;top:149px;width:1px;height:6px;background:#0b57d0"></div>
<div class="a" style="left:1079px;top:146px;width:1px;height:56px;background:#a8c7fa"></div>
<div class="a" style="left:419px;top:146px;width:1px;height:56px;background:#a8c7fa"></div>
<div class="a" style="left:423px;top:163.5px;width:6px;height:1px;background:#d0d0d0"></div>
<div class="a" style="left:422.5px;top:166px;width:8px;height:5.5px;background:#6a9ff5"></div>
<div class="a" style="left:423px;top:160px;width:1px;height:42px;background:#b0334a"></div>
<div class="a" style="left:750px;top:164px;width:6px;height:1px;background:#d0d0d0"></div>
<div class="a" style="left:750.5px;top:170.3px;width:6.5px;height:1px;background:#4a86f0"></div>
<div class="a" style="left:751px;top:172.3px;width:6.5px;height:1px;background:#4a86f0"></div>
<div class="a" style="left:751px;top:174.3px;width:6.5px;height:1px;background:#4a86f0"></div>
<div class="a" style="left:751px;top:176.3px;width:6.5px;height:1px;background:#4a86f0"></div>
<div class="a" style="left:751px;top:178.3px;width:6.5px;height:1px;background:#4a86f0"></div>
<div class="a" style="left:751px;top:180.3px;width:6.5px;height:1px;background:#4a86f0"></div>
<div class="a" style="left:989px;top:164px;width:6px;height:1px;background:#d0d0d0"></div>
<div class="a" style="left:989px;top:170.5px;width:6.5px;height:1px;background:#4a86f0"></div>
<div class="a" style="left:982.2px;top:182.8px;width:3px;height:1px;background:#137a7f"></div>
<div class="a" style="left:986px;top:182.8px;width:6.8px;height:1px;background:#4a86f0"></div>
<div class="a" style="left:982.2px;top:184.8px;width:3px;height:1px;background:#137a7f"></div>
<div class="a" style="left:986px;top:184.8px;width:6.8px;height:1px;background:#4a86f0"></div>
<div class="a" style="left:982.2px;top:186.8px;width:3px;height:1px;background:#137a7f"></div>
<div class="a" style="left:986px;top:186.8px;width:6.8px;height:1px;background:#4a86f0"></div>
<div class="a" style="left:982.2px;top:188.8px;width:3px;height:1px;background:#137a7f"></div>
<div class="a" style="left:986px;top:188.8px;width:6.8px;height:1px;background:#4a86f0"></div>
<div class="a" style="left:982.2px;top:190.8px;width:3px;height:1px;background:#137a7f"></div>
<div class="a" style="left:986px;top:190.8px;width:6.8px;height:1px;background:#4a86f0"></div>
<div class="a" style="left:982.2px;top:192.8px;width:3px;height:1px;background:#137a7f"></div>
<div class="a" style="left:986px;top:192.8px;width:6.8px;height:1px;background:#4a86f0"></div>
<!-- table -->
<div class="a" style="left:419px;top:203px;width:661px;height:19px;background:#f8fafd;border-bottom:1px solid #d6e2f5"></div>
<div class="a" style="left:419px;top:222px;width:661px;height:14.3px;background:#f4f7fc"></div>
<div class="a" style="left:419px;top:251.1px;width:661px;height:14.8px;background:#f4f7fc"></div>
<div class="a" style="left:419px;top:280.7px;width:661px;height:14.8px;background:#f4f7fc"></div>
<div class="a" style="left:663.3px;top:203px;width:1px;height:358px;background:#e3ebf7"></div>
<div class="a" style="left:737.6px;top:203px;width:1px;height:358px;background:#e3ebf7"></div>
<div class="a" style="left:810.4px;top:203px;width:1px;height:358px;background:#e3ebf7"></div>
<div class="a" style="left:933.7px;top:203px;width:1px;height:358px;background:#e3ebf7"></div>
<div class="a" style="left:1007.4px;top:203px;width:1px;height:358px;background:#e3ebf7"></div>
<div class="t" style="left:422.8px;top:207.5px;font-size:9.2px;color:#1f1f1f">Name</div>
<div class="t" style="left:666.7px;top:207.5px;font-size:9.2px;color:#1f1f1f">Status</div>
<div class="t" style="left:740.2px;top:207.5px;font-size:9.2px;color:#1f1f1f">Type</div>
<div class="t" style="left:813.7px;top:207.5px;font-size:9.2px;color:#1f1f1f">Initiator</div>
<div class="t" style="left:936.5px;top:207.5px;font-size:9.2px;color:#1f1f1f">Size</div>
<div class="t" style="left:1010.6px;top:207.5px;font-size:9.2px;color:#1f1f1f">Time</div>
<svg style="left:422.5px;top:224.7px" width="10" height="9"><path d="M2.8 0.8 Q1.4 0.8 1.4 2.3 V3.6 Q1.4 4.5 0.5 4.5 Q1.4 4.5 1.4 5.4 V6.7 Q1.4 8.2 2.8 8.2 M7.2 0.8 Q8.6 0.8 8.6 2.3 V3.6 Q8.6 4.5 9.5 4.5 Q8.6 4.5 8.6 5.4 V6.7 Q8.6 8.2 7.2 8.2" fill="none" stroke="#e2601a" stroke-width="1.1"/><circle cx="5" cy="2.6" r="0.75" fill="#e2601a"/><path d="M5 4 V7" stroke="#e2601a" stroke-width="1.2"/></svg>
<div class="t" style="left:435.4px;top:224.7px;font-size:9.2px;color:#1f1f1f">info?t=1753398983274</div>
<div class="t" style="left:666.7px;top:224.7px;font-size:9.2px;color:#1f1f1f">200</div>
<div class="t" style="left:740.2px;top:224.7px;font-size:9.2px;color:#1f1f1f">xhr</div>
<div class="t" style="left:813.7px;top:224.7px;font-size:9px;color:#333;text-decoration:underline">chunk-vendors.js:11858</div>
<div class="t" style="left:940px;width:63.1px;text-align:right;top:224.7px;font-size:9.2px;color:#1f1f1f">0.4 kB</div>
<div class="t" style="left:1010px;width:66.7px;text-align:right;top:224.7px;font-size:9.2px;color:#1f1f1f">2 ms</div>
<svg style="left:422.5px;top:239.5px" width="10" height="9"><path d="M2.8 0.8 Q1.4 0.8 1.4 2.3 V3.6 Q1.4 4.5 0.5 4.5 Q1.4 4.5 1.4 5.4 V6.7 Q1.4 8.2 2.8 8.2 M7.2 0.8 Q8.6 0.8 8.6 2.3 V3.6 Q8.6 4.5 9.5 4.5 Q8.6 4.5 8.6 5.4 V6.7 Q8.6 8.2 7.2 8.2" fill="none" stroke="#e2601a" stroke-width="1.1"/><circle cx="5" cy="2.6" r="0.75" fill="#e2601a"/><path d="M5 4 V7" stroke="#e2601a" stroke-width="1.2"/></svg>
<div class="t" style="left:435.4px;top:239.5px;font-size:9.2px;color:#1f1f1f">info?t=1753398983275</div>
<div class="t" style="left:666.7px;top:239.5px;font-size:9.2px;color:#1f1f1f">200</div>
<div class="t" style="left:740.2px;top:239.5px;font-size:9.2px;color:#1f1f1f">xhr</div>
<div class="t" style="left:1010px;width:66.7px;text-align:right;top:239.5px;font-size:9.2px;color:#1f1f1f">2 ms</div>
<svg style="left:422.5px;top:254.3px" width="10" height="9"><path d="M2.8 0.8 Q1.4 0.8 1.4 2.3 V3.6 Q1.4 4.5 0.5 4.5 Q1.4 4.5 1.4 5.4 V6.7 Q1.4 8.2 2.8 8.2 M7.2 0.8 Q8.6 0.8 8.6 2.3 V3.6 Q8.6 4.5 9.5 4.5 Q8.6 4.5 8.6 5.4 V6.7 Q8.6 8.2 7.2 8.2" fill="none" stroke="#e2601a" stroke-width="1.1"/><circle cx="5" cy="2.6" r="0.75" fill="#e2601a"/><path d="M5 4 V7" stroke="#e2601a" stroke-width="1.2"/></svg>
<div class="t" style="left:435.4px;top:254.3px;font-size:9.2px;color:#1f1f1f">getVierificationCode</div>
<div class="t" style="left:666.7px;top:254.3px;font-size:9.2px;color:#1f1f1f">200</div>
<div class="t" style="left:740.2px;top:254.3px;font-size:9.2px;color:#1f1f1f">xhr</div>
<div class="t" style="left:1010px;width:66.7px;text-align:right;top:254.3px;font-size:9.2px;color:#1f1f1f">5 ms</div>
<svg style="left:422.5px;top:269.1px" width="10" height="9"><path d="M2.8 0.8 Q1.4 0.8 1.4 2.3 V3.6 Q1.4 4.5 0.5 4.5 Q1.4 4.5 1.4 5.4 V6.7 Q1.4 8.2 2.8 8.2 M7.2 0.8 Q8.6 0.8 8.6 2.3 V3.6 Q8.6 4.5 9.5 4.5 Q8.6 4.5 8.6 5.4 V6.7 Q8.6 8.2 7.2 8.2" fill="none" stroke="#e2601a" stroke-width="1.1"/><circle cx="5" cy="2.6" r="0.75" fill="#e2601a"/><path d="M5 4 V7" stroke="#e2601a" stroke-width="1.2"/></svg>
<div class="t" style="left:435.4px;top:269.1px;font-size:9.2px;color:#1f1f1f">login</div>
<div class="t" style="left:666.7px;top:269.1px;font-size:9.2px;color:#1f1f1f">200</div>
<div class="t" style="left:740.2px;top:269.1px;font-size:9.2px;color:#1f1f1f">xhr</div>
<div class="t" style="left:1010px;width:66.7px;text-align:right;top:269.1px;font-size:9.2px;color:#1f1f1f">11 ms</div>
<svg style="left:422.5px;top:283.9px" width="10" height="9"><path d="M2.8 0.8 Q1.4 0.8 1.4 2.3 V3.6 Q1.4 4.5 0.5 4.5 Q1.4 4.5 1.4 5.4 V6.7 Q1.4 8.2 2.8 8.2 M7.2 0.8 Q8.6 0.8 8.6 2.3 V3.6 Q8.6 4.5 9.5 4.5 Q8.6 4.5 8.6 5.4 V6.7 Q8.6 8.2 7.2 8.2" fill="none" stroke="#e2601a" stroke-width="1.1"/><circle cx="5" cy="2.6" r="0.75" fill="#e2601a"/><path d="M5 4 V7" stroke="#e2601a" stroke-width="1.2"/></svg>
<div class="t" style="left:435.4px;top:283.9px;font-size:9.2px;color:#1f1f1f">getTreeMenu</div>
<div class="t" style="left:666.7px;top:283.9px;font-size:9.2px;color:#1f1f1f">200</div>
<div class="t" style="left:740.2px;top:283.9px;font-size:9.2px;color:#1f1f1f">xhr</div>
<div class="t" style="left:1010px;width:66.7px;text-align:right;top:283.9px;font-size:9.2px;color:#1f1f1f">10 ms</div>
<svg style="left:422.5px;top:298.7px" width="10" height="9"><path d="M2.8 0.8 Q1.4 0.8 1.4 2.3 V3.6 Q1.4 4.5 0.5 4.5 Q1.4 4.5 1.4 5.4 V6.7 Q1.4 8.2 2.8 8.2 M7.2 0.8 Q8.6 0.8 8.6 2.3 V3.6 Q8.6 4.5 9.5 4.5 Q8.6 4.5 8.6 5.4 V6.7 Q8.6 8.2 7.2 8.2" fill="none" stroke="#e2601a" stroke-width="1.1"/><circle cx="5" cy="2.6" r="0.75" fill="#e2601a"/><path d="M5 4 V7" stroke="#e2601a" stroke-width="1.2"/></svg>
<div class="t" style="left:435.4px;top:298.7px;font-size:9.2px;color:#1f1f1f">getPageData</div>
<div class="t" style="left:666.7px;top:298.7px;font-size:9.2px;color:#1f1f1f">200</div>
<div class="t" style="left:740.2px;top:298.7px;font-size:9.2px;color:#1f1f1f">xhr</div>
<div class="t" style="left:1010px;width:66.7px;text-align:right;top:298.7px;font-size:9.2px;color:#1f1f1f">5 ms</div>
<!-- status bar -->
<div class="a" style="left:419px;top:561px;width:661px;height:17px;background:#fff;border-top:1px solid #d6e2f5"></div>
<div class="t" style="left:426.1px;top:565.7px;font-size:8.85px;color:#1f1f1f">6 / 55 requests</div>
<div class="t" style="left:500.2px;top:565.7px;font-size:8.85px;color:#1f1f1f">5.1 kB / 12.4 kB transferred</div>
<div class="t" style="left:621.7px;top:565.7px;font-size:8.85px;color:#1f1f1f">3.5 kB / 7,938 kB resources</div>
<div class="t" style="left:743.5px;top:565.7px;font-size:8.85px;color:#1f1f1f">Finish: 48.72 s</div>
<div class="t" style="left:812.8px;top:565.7px;font-size:8.85px;color:#0b57d0">DOMContentLoaded: 344 ms</div>
<div class="t" style="left:943.6px;top:565.7px;font-size:8.85px;color:#b3261e">Load: 364 ms</div>
<div class="a" style="left:493.5px;top:564px;width:1px;height:12px;background:#d6e2f5"></div>
<div class="a" style="left:615px;top:564px;width:1px;height:12px;background:#d6e2f5"></div>
<div class="a" style="left:736.5px;top:564px;width:1px;height:12px;background:#d6e2f5"></div>
<div class="a" style="left:806.9px;top:564px;width:1px;height:12px;background:#d6e2f5"></div>
<div class="a" style="left:937.2px;top:564px;width:1px;height:12px;background:#d6e2f5"></div>
<!-- popover -->
<div class="a" style="left:803px;top:239px;width:252.5px;height:329px;background:#fff;border-radius:6px;box-shadow:0 1px 4px rgba(0,0,0,.22),0 0 1px rgba(0,0,0,.2)"></div>
<div class="t mono" style="left:814px;top:247.2px;color:#1f1f1f">AbstractXHRObject._start</div>
<div class="t mono" style="left:930.5px;top:247.2px;color:#474747">@</div>
<div class="t mono" style="left:939px;top:247.2px;color:#2d6bd4;text-decoration:underline">chunk-vendors.js:11858</div>
<div class="t mono" style="left:814px;top:260.9px;color:#1f1f1f">(anonymous)</div>
<div class="t mono" style="left:930.5px;top:260.9px;color:#474747">@</div>
<div class="t mono" style="left:939px;top:260.9px;color:#2d6bd4;text-decoration:underline">chunk-vendors.js:11747</div>
<div class="t mono" style="left:814px;top:276.3px;font-weight:bold;color:#1f1f1f">setTimeout</div>
<div class="t mono" style="left:814px;top:289.7px;color:#1f1f1f">AbstractXHRObject</div>
<div class="t mono" style="left:930.5px;top:289.7px;color:#474747">@</div>
<div class="t mono" style="left:939px;top:289.7px;color:#2d6bd4;text-decoration:underline">chunk-vendors.js:11746</div>
<div class="t mono" style="left:814px;top:303.7px;color:#1f1f1f">XHRLocalObject</div>
<div class="t mono" style="left:930.5px;top:303.7px;color:#474747">@</div>
<div class="t mono" style="left:939px;top:303.7px;color:#2d6bd4;text-decoration:underline">chunk-vendors.js:13166</div>
<div class="t mono" style="left:814px;top:317.3px;color:#1f1f1f">InfoAjax</div>
<div class="t mono" style="left:930.5px;top:317.3px;color:#474747">@</div>
<div class="t mono" style="left:939px;top:317.3px;color:#2d6bd4;text-decoration:underline">chunk-vendors.js:10608</div>
<div class="t mono" style="left:814px;top:331.0px;color:#1f1f1f">InfoReceiver._getReceiver</div>
<div class="t mono" style="left:930.5px;top:331.0px;color:#474747">@</div>
<div class="t mono" style="left:939px;top:331.0px;color:#2d6bd4;text-decoration:underline">chunk-vendors.js:10786</div>
<div class="t mono" style="left:814px;top:344.7px;color:#1f1f1f">InfoReceiver.doXhr</div>
<div class="t mono" style="left:930.5px;top:344.7px;color:#474747">@</div>
<div class="t mono" style="left:939px;top:344.7px;color:#2d6bd4;text-decoration:underline">chunk-vendors.js:10806</div>
<div class="t mono" style="left:814px;top:358.7px;color:#1f1f1f">(anonymous)</div>
<div class="t mono" style="left:930.5px;top:358.7px;color:#474747">@</div>
<div class="t mono" style="left:939px;top:358.7px;color:#2d6bd4;text-decoration:underline">chunk-vendors.js:10775</div>
<div class="t mono" style="left:814px;top:374.1px;font-weight:bold;color:#1f1f1f">setTimeout</div>
<div class="t mono" style="left:814px;top:387.5px;color:#1f1f1f">InfoReceiver</div>
<div class="t mono" style="left:930.5px;top:387.5px;color:#474747">@</div>
<div class="t mono" style="left:939px;top:387.5px;color:#2d6bd4;text-decoration:underline">chunk-vendors.js:10774</div>
<div class="t mono" style="left:814px;top:401.5px;color:#1f1f1f">SockJS</div>
<div class="t mono" style="left:930.5px;top:401.5px;color:#474747">@</div>
<div class="t mono" style="left:939px;top:401.5px;color:#2d6bd4;text-decoration:underline">chunk-vendors.js:10983</div>
<div class="t mono" style="left:814px;top:415.2px;color:#1f1f1f">SockJSClient</div>
<div class="t mono" style="left:930.5px;top:415.2px;color:#474747">@</div>
<div class="t mono" style="left:939px;top:415.2px;color:#2d6bd4;text-decoration:underline">chunk-vendors.js:33552</div>
<div class="t mono" style="left:814px;top:428.9px;color:#1f1f1f">initSocket</div>
<div class="t mono" style="left:930.5px;top:428.9px;color:#474747">@</div>
<div class="t mono" style="left:939px;top:428.9px;color:#2d6bd4;text-decoration:underline">chunk-vendors.js:18521</div>
<div class="t mono" style="left:814px;top:442.5px;color:#1f1f1f">(anonymous)</div>
<div class="t mono" style="left:930.5px;top:442.5px;color:#474747">@</div>
<div class="t mono" style="left:939px;top:442.5px;color:#2d6bd4;text-decoration:underline">chunk-vendors.js:21781</div>
<div class="t mono" style="left:814px;top:456.5px;color:#1f1f1f">hW9V</div>
<div class="t mono" style="left:930.5px;top:456.5px;color:#474747">@</div>
<div class="t mono" style="left:939px;top:456.5px;color:#2d6bd4;text-decoration:underline">chunk-vendors.js:21782</div>
<div class="t mono" style="left:814px;top:470.2px;color:#1f1f1f">__webpack_require__</div>
<div class="t mono" style="left:930.5px;top:470.2px;color:#474747">@</div>
<div class="t mono" style="left:939px;top:470.2px;color:#2d6bd4;text-decoration:underline">index.js:854</div>
<div class="t mono" style="left:814px;top:483.8px;color:#1f1f1f">fn</div>
<div class="t mono" style="left:930.5px;top:483.8px;color:#474747">@</div>
<div class="t mono" style="left:939px;top:483.8px;color:#2d6bd4;text-decoration:underline">index.js:151</div>
<div class="t mono" style="left:814px;top:497.8px;color:#1f1f1f">1</div>
<div class="t mono" style="left:930.5px;top:497.8px;color:#474747">@</div>
<div class="t mono" style="left:939px;top:497.8px;color:#2d6bd4;text-decoration:underline">index.js:1022</div>
<div class="t mono" style="left:814px;top:511.5px;color:#1f1f1f">__webpack_require__</div>
<div class="t mono" style="left:930.5px;top:511.5px;color:#474747">@</div>
<div class="t mono" style="left:939px;top:511.5px;color:#2d6bd4;text-decoration:underline">index.js:854</div>
<div class="t mono" style="left:814px;top:525.1px;color:#1f1f1f">checkDeferredModules</div>
<div class="t mono" style="left:930.5px;top:525.1px;color:#474747">@</div>
<div class="t mono" style="left:939px;top:525.1px;color:#2d6bd4;text-decoration:underline">index.js:46</div>
<div class="t mono" style="left:814px;top:538.8px;color:#1f1f1f">(anonymous)</div>
<div class="t mono" style="left:930.5px;top:538.8px;color:#474747">@</div>
<div class="t mono" style="left:939px;top:538.8px;color:#2d6bd4;text-decoration:underline">index.js:994</div>
<div class="t mono" style="left:814px;top:552.8px;color:#1f1f1f">(anonymous)</div>
<div class="t mono" style="left:930.5px;top:552.8px;color:#474747">@</div>
<div class="t mono" style="left:939px;top:552.8px;color:#2d6bd4;text-decoration:underline">index.js:997</div>


<!-- taskbar -->
<div class="a" style="left:0;top:579px;width:1080px;height:5px;background:#1f303b"></div>
<div class="a" style="left:280px;top:579px;width:34px;height:5px;background:#4b5e67"></div>
<div class="a" style="left:1003px;top:582px;width:22px;height:2px;background:#8a939a;opacity:.6"></div>
</body></html>
